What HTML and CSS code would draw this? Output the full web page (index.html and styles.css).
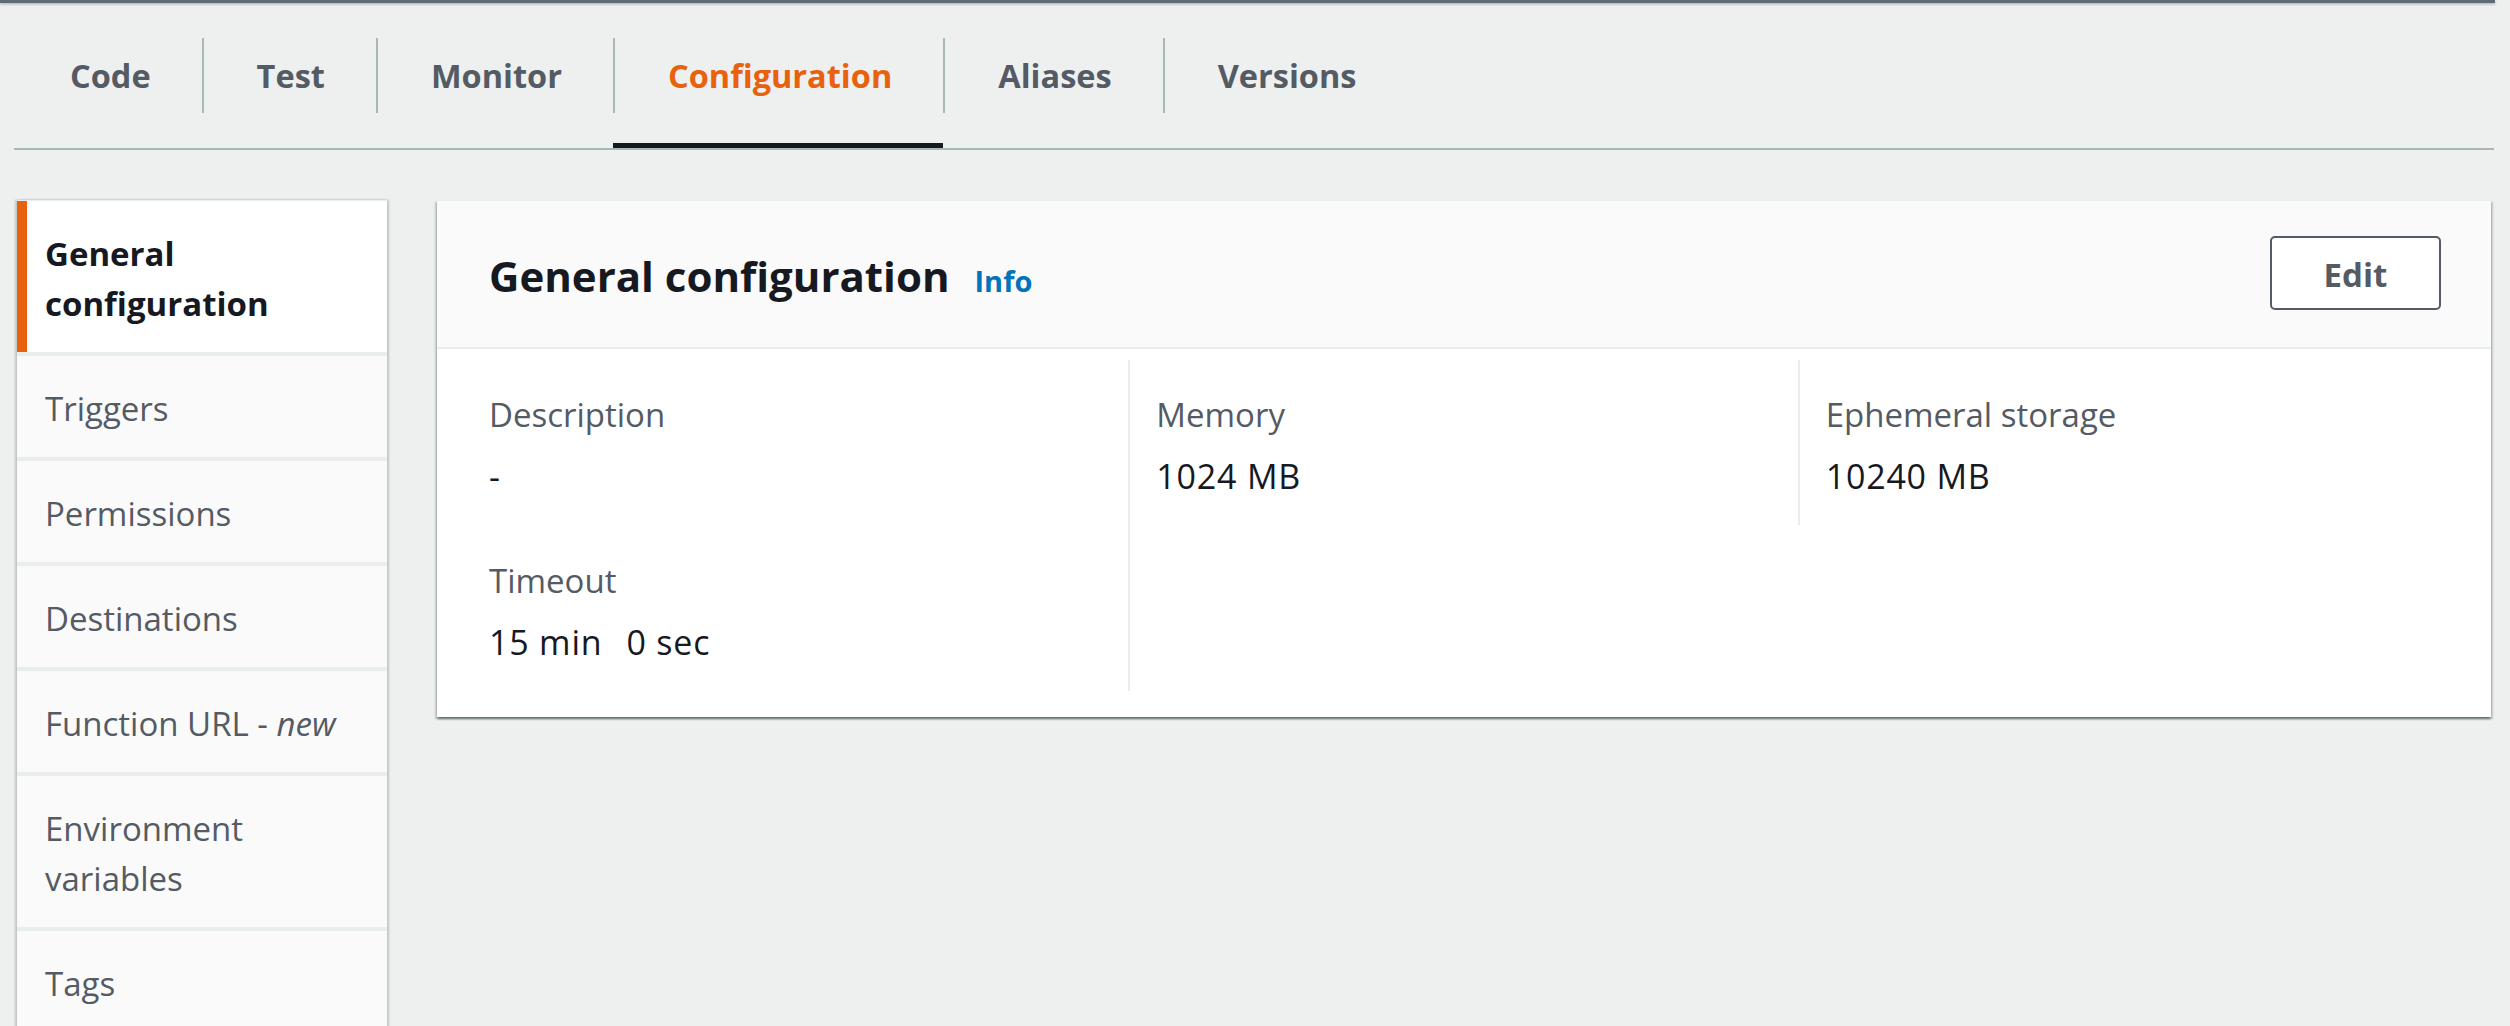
FILE: index.html
```html
<!DOCTYPE html>
<html lang="en">
<head>
<meta charset="utf-8">
<title>Configuration</title>
<link rel="stylesheet" href="styles.css">
</head>
<body>
<div class="topbar"></div>
<div class="page">
  <nav class="tabs">
    <div class="tab"><span class="tab-label">Code</span></div>
    <div class="tab"><span class="tab-label">Test</span></div>
    <div class="tab"><span class="tab-label">Monitor</span></div>
    <div class="tab tab-active"><span class="tab-label">Configuration</span></div>
    <div class="tab"><span class="tab-label">Aliases</span></div>
    <div class="tab"><span class="tab-label">Versions</span></div>
  </nav>
  <div class="main">
    <ul class="sidenav">
      <li class="side-item side-active">General configuration</li>
      <li class="side-item">Triggers</li>
      <li class="side-item">Permissions</li>
      <li class="side-item">Destinations</li>
      <li class="side-item">Function URL - <em>new</em></li>
      <li class="side-item">Environment variables</li>
      <li class="side-item">Tags</li>
    </ul>
    <section class="card">
      <header class="card-header">
        <div class="card-title"><h2 class="title">General configuration</h2><a class="info">Info</a></div>
        <button class="btn">Edit</button>
      </header>
      <div class="card-body">
        <div class="col col-first">
          <div class="field">
            <div class="label">Description</div>
            <div class="value">-</div>
          </div>
          <div class="field">
            <div class="label">Timeout</div>
            <div class="value"><span class="unit">15 min</span><span class="unit">0 sec</span></div>
          </div>
        </div>
        <div class="col col-mid">
          <div class="field">
            <div class="label">Memory</div>
            <div class="value">1024 MB</div>
          </div>
        </div>
        <div class="col col-last">
          <div class="field">
            <div class="label">Ephemeral storage</div>
            <div class="value">10240 MB</div>
          </div>
        </div>
      </div>
    </section>
  </div>
</div>
</body>
</html>
```

FILE: styles.css
```css
* { box-sizing: border-box; }

html, body {
  margin: 0;
  padding: 0;
  background: #eef0ef;
  font-family: "Open Sans", "Noto Sans", "Liberation Sans", sans-serif;
  color: #16191f;
  overflow: hidden;
}

.topbar {
  height: 3px;
  margin-right: 15px;
  background: #5f6b74;
  box-shadow: 0 1px 3px rgba(0, 28, 36, 0.35);
}

.page {
  padding: 0 16px 0 14px;
}

.tabs {
  display: flex;
  padding: 35px 0 0 3px;
  border-bottom: 2px solid #aab7b8;
}

.tab {
  border-bottom: 5px solid transparent;
  padding-bottom: 30px;
}

.tab-label {
  display: block;
  height: 75px;
  line-height: 75px;
  padding: 0 51px 0 53px;
  border-left: 2px solid #aab7b8;
  font-size: 32.5px;
  font-weight: 700;
  color: #545b64;
}

.tab:first-child .tab-label {
  border-left: none;
}

.tab-active {
  border-bottom-color: #16191f;
}

.tab-active .tab-label {
  color: #e8620d;
}

.main {
  display: flex;
  align-items: flex-start;
  gap: 50px;
  margin: 50px 3px 0 3px;
}

.sidenav {
  list-style: none;
  margin: 0;
  padding: 0;
  width: 370px;
  flex: none;
  background: #eaeded;
  border-top: 1px solid #eaeded;
  box-shadow: -2px 0 2px rgba(0, 28, 36, 0.2), 2px 0 2px rgba(0, 28, 36, 0.2);
}

.side-item {
  background: #fafafa;
  padding: 28px 20px 23px 28px;
  line-height: 50px;
  font-size: 33px;
  color: #545b64;
  margin-bottom: 4px;
}

.side-item em {
  font-style: italic;
}

.side-active {
  background: #ffffff;
  border-left: 10px solid #e8620d;
  padding-left: 18px;
  font-weight: 700;
  color: #16191f;
}

.card {
  flex: 1;
  background: #ffffff;
  border-top: 1px solid #eaeded;
  box-shadow: 0 2px 2px 0 rgba(0, 28, 36, 0.45), 2px 2px 2px 0 rgba(0, 28, 36, 0.15), -2px 2px 2px 0 rgba(0, 28, 36, 0.15);
}

.card-header {
  display: flex;
  align-items: center;
  justify-content: space-between;
  background: #fafafa;
  padding: 35px 50px 37px 52px;
  border-bottom: 2px solid #eaeded;
}

.card-title {
  display: flex;
  align-items: baseline;
  gap: 25px;
  padding-top: 6px;
}

.title {
  margin: 0;
  font-size: 42px;
  font-weight: 700;
  line-height: 60px;
  color: #16191f;
}

.info {
  font-size: 29px;
  font-weight: 700;
  color: #0073bb;
}

.btn {
  width: 171px;
  height: 74px;
  border: 2px solid #545b64;
  border-radius: 5px;
  background: #ffffff;
  font-family: inherit;
  font-size: 33px;
  font-weight: 700;
  color: #545b64;
  padding: 3px 0 0;
}

.card-body {
  display: grid;
  grid-template-columns: repeat(3, 1fr);
  align-items: start;
  padding: 11px 24px 26px 22px;
}

.col {
  padding: 31px 26px 25px 26px;
}

.col-first {
  padding-left: 30px;
}

.col-mid {
  border-left: 2px solid #eaeded;
  align-self: stretch;
}

.col-last {
  border-left: 2px solid #eaeded;
}

.field + .field {
  margin-top: 57px;
}

.label {
  font-size: 33px;
  line-height: 48px;
  color: #545b64;
}

.value {
  margin-top: 13px;
  font-size: 34px;
  line-height: 48px;
  letter-spacing: 0.8px;
  color: #16191f;
}

.unit + .unit {
  margin-left: 24px;
}
```
